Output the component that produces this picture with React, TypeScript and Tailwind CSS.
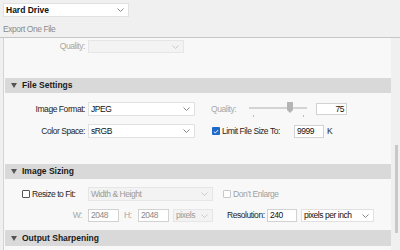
import { ReactNode } from 'react';

type Children = { children?: ReactNode };

const Chevron = ({ color = '#7a7a7a' }: { color?: string }) => (
  <svg width="7" height="4" viewBox="0 0 7 4" className="shrink-0">
    <polyline points="0.5,0.5 3.5,3.5 6.5,0.5" fill="none" stroke={color} strokeWidth="0.9" />
  </svg>
);

const Triangle = () => (
  <svg width="6" height="5" viewBox="0 0 6 5" className="shrink-0">
    <polygon points="0,0 6,0 3,5" fill="#555" />
  </svg>
);

const Select = ({
  value,
  width,
  disabled,
  bold,
}: {
  value: string;
  width: string;
  disabled?: boolean;
  bold?: boolean;
}) => (
  <div
    className={`${width} h-full flex items-center justify-between pl-[2px] pr-[4px] border ${
      disabled ? 'bg-[#f3f3f3] border-[#e6e6e6] text-[#9a9a9a]' : 'bg-white border-[#e1e1e1] text-[#111]'
    } ${bold ? 'font-bold text-[8.5px]' : 'tracking-[-0.45px]'}`}
  >
    <span>{value}</span>
    <Chevron color={disabled ? '#c4c4c4' : '#7a7a7a'} />
  </div>
);

const Field = ({
  value,
  width,
  disabled,
  right,
}: {
  value: string;
  width: string;
  disabled?: boolean;
  right?: boolean;
}) => (
  <div
    className={`${width} h-full flex items-center bg-white border border-[#d2d2d2] px-[2px] tracking-[-0.45px] ${
      right ? 'justify-end' : ''
    } ${disabled ? 'text-[#8a8a8a]' : 'text-[#111]'}`}
  >
    {value}
  </div>
);

const Check = ({ checked, disabled }: { checked?: boolean; disabled?: boolean }) =>
  checked ? (
    <div className="w-[8px] h-[8px] rounded-[1px] bg-[#1e6acb] flex items-center justify-center shrink-0">
      <svg width="6" height="5" viewBox="0 0 6 5">
        <polyline points="0.8,2.6 2.3,4 5.2,1" fill="none" stroke="#fff" strokeWidth="0.9" />
      </svg>
    </div>
  ) : (
    <div
      className={`w-[8px] h-[8px] rounded-[1px] border bg-white shrink-0 ${
        disabled ? 'border-[#c8c8c8]' : 'border-[#555]'
      }`}
    />
  );

const Band = ({ title, className = '' }: { title: string; className?: string }) => (
  <div className={`ml-[1px] w-[386px] bg-[#d9d9d9] flex items-center ${className}`}>
    <div className="ml-[6px]">
      <Triangle />
    </div>
    <span className="ml-[5px] font-bold text-[8.5px] text-[#1a1a1a]">{title}</span>
  </div>
);

const Label = ({ children, className = '' }: Children & { className?: string }) => (
  <span className={`tracking-[-0.45px] text-[#1e1e1e] whitespace-nowrap ${className}`}>{children}</span>
);

export default function App() {
  return (
    <div className="w-[400px] h-[250px] overflow-hidden bg-[#f0f0f0] text-[8.5px] leading-none font-['Liberation_Sans',Arial,sans-serif]">
      <div className="h-[37px] pt-[3px] pl-[3px]">
        <div className="h-[14px]">
          <Select value="Hard Drive" width="w-[126px]" bold />
        </div>
        <div className="mt-[8px] text-[#8c8c8c] tracking-[-0.45px]">Export One File</div>
      </div>
      <div className="h-px bg-[#c6c6c6]" />

      <div className="flex">
        <div className="ml-[3px] w-[388px] h-[212px] border-l border-[#d4d4d4] bg-[#f8f8f8]">
          {/* Quality (disabled) */}
          <div className="mt-[2px] h-[13px] flex items-center">
            <Label className="w-[81px] text-right !text-[#a6a6a6]">Quality:</Label>
            <div className="ml-[3px] h-full">
              <Select value="" width="w-[96px]" disabled />
            </div>
          </div>

          <Band title="File Settings" className="mt-[25px] h-[15px]" />

          <div className="mt-[9px] h-[14px] flex items-center">
            <Label className="w-[81px] text-right">Image Format:</Label>
            <div className="ml-[3px] h-full">
              <Select value="JPEG" width="w-[107px]" />
            </div>
            <Label className="ml-[16px] w-[38px] !text-[#a8a8a8]">Quality:</Label>
            <div className="relative w-[58px] h-full">
              <div className="absolute left-0 right-0 top-[5px] h-[2px] bg-[#d4d4d4]" />
              <svg width="8" height="11" viewBox="0 0 8 11" className="absolute left-[37px] top-0">
                <polygon points="1,0 7,0 7,8 4,11 1,8" fill="#b4b4b4" />
              </svg>
              <div className="absolute left-[4px] top-[13px] w-px h-[2px] bg-[#bdbdbd]" />
              <div className="absolute left-[54px] top-[13px] w-px h-[2px] bg-[#bdbdbd]" />
            </div>
            <div className="ml-[9px] h-[12px]">
              <Field value="75" width="w-[31px]" right />
            </div>
          </div>

          <div className="mt-[8px] h-[14px] flex items-center">
            <Label className="w-[81px] text-right">Color Space:</Label>
            <div className="ml-[3px] h-full">
              <Select value="sRGB" width="w-[107px]" />
            </div>
            <div className="ml-[17px]">
              <Check checked />
            </div>
            <Label className="ml-[2px] w-[72px]">Limit File Size To:</Label>
            <div className="h-[13px]">
              <Field value="9999" width="w-[30px]" />
            </div>
            <Label className="ml-[3px]">K</Label>
          </div>

          <Band title="Image Sizing" className="mt-[26px] h-[15px]" />

          <div className="mt-[8px] h-[14px] flex items-center">
            <div className="ml-[18px]">
              <Check />
            </div>
            <Label className="ml-[2px] w-[56px]">Resize to Fit:</Label>
            <div className="h-full">
              <Select value="Width & Height" width="w-[125px]" disabled />
            </div>
            <div className="ml-[10px]">
              <Check disabled />
            </div>
            <Label className="ml-[2px] !text-[#a0a0a0]">Don’t Enlarge</Label>
          </div>

          <div className="mt-[8px] h-[13px] flex items-center">
            <Label className="w-[78px] text-right !text-[#a6a6a6]">W:</Label>
            <div className="ml-[6px] h-full">
              <Field value="2048" width="w-[31px]" disabled />
            </div>
            <Label className="w-[19px] pl-[5px] !text-[#a6a6a6]">H:</Label>
            <div className="h-full">
              <Field value="2048" width="w-[31px]" disabled />
            </div>
            <div className="ml-[4px] h-full">
              <Select value="pixels" width="w-[40px]" disabled />
            </div>
            <Label className="ml-[14px] w-[40px]">Resolution:</Label>
            <div className="h-full">
              <Field value="240" width="w-[30px]" />
            </div>
            <div className="ml-[4px] h-full">
              <Select value="pixels per inch" width="w-[73px]" />
            </div>
          </div>

          <Band title="Output Sharpening" className="mt-[8px] h-[16px]" />
        </div>
        <div className="flex-1 pl-[4px] pt-[107px]">
          <div className="w-[3px] h-[88px] bg-[#c8c8c8]" />
        </div>
      </div>
    </div>
  );
}
